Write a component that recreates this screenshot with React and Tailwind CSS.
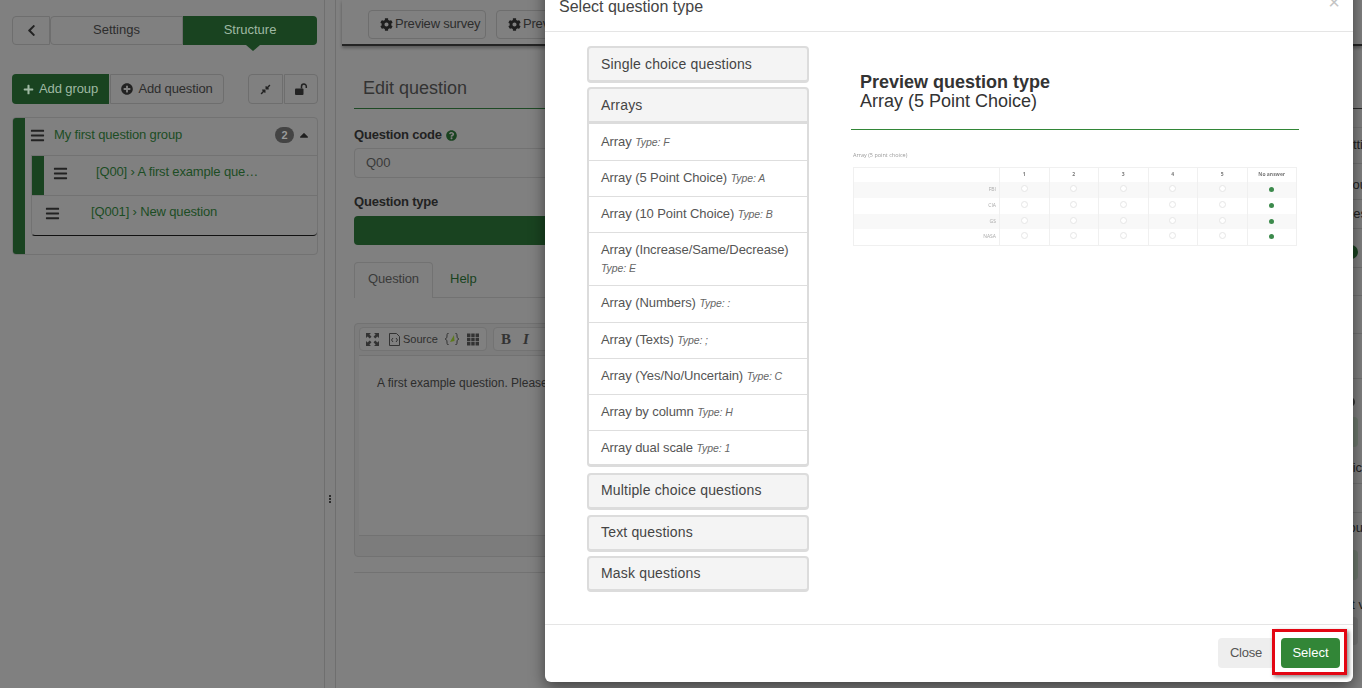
import React from "react";
import { FaBars, FaPlus, FaPlusCircle, FaCog, FaChevronLeft, FaCompressAlt, FaQuestionCircle, FaCaretUp } from "react-icons/fa";

const arrayItems = [
  ["Array", "F", "h-[37px] pt-[9px]"],
  ["Array (5 Point Choice)", "A", "h-9 pt-[8px]"],
  ["Array (10 Point Choice)", "B", "h-9 pt-[8px]"],
  ["Array (Increase/Same/Decrease)", "E", "h-[53px] pt-[8px]"],
  ["Array (Numbers)", ":", "h-[37px] pt-[8px]"],
  ["Array (Texts)", ";", "h-9 pt-[8px]"],
  ["Array (Yes/No/Uncertain)", "C", "h-9 pt-[8px]"],
  ["Array by column", "H", "h-9 pt-[8px]"],
  ["Array dual scale", "1", "h-9 pt-[8px]"],
];

function GroupHead({ children, mt = "mt-1", h = "h-[37px]", open }) {
  return (
    <div className={`${mt} ${h} ${open ? "rounded-t" : "rounded"} flex items-center border-x-2 border-t-2 border-b-[3px] border-[#dcdcdc] bg-[#f4f4f4] pl-3 text-[14px] tracking-[0.17px] text-[#444]`}>
      {children}
    </div>
  );
}

function PreviewTable() {
  const cols = ["1", "2", "3", "4", "5", "No answer"];
  const rows = ["FBI", "CIA", "GS", "NASA"];
  return (
    <div className="ml-[2px] mt-[21px] w-[444px] text-[#999] blur-[0.3px]" style={{ fontFamily: '"Open Sans", sans-serif' }}>
      <div className="text-[5.5px] leading-[8px]">Array (5 point choice)</div>
      <div className="mt-[8px] border border-[#f0f0f0]">
        <div className="flex h-[14px] items-center">
          <div className="h-full w-[146px] border-r border-[#f0f0f0]" />
          {cols.map((c) => (
            <div key={c} className="flex h-full flex-1 items-center justify-center border-r border-[#f0f0f0] text-[5px] font-bold text-[#777] last:border-r-0">{c}</div>
          ))}
        </div>
        {rows.map((r, i) => (
          <div key={r} className={`flex h-[15.75px] items-center ${i % 2 === 0 ? "bg-[#f8f8f8]" : "bg-white"}`}>
            <div className="flex h-full w-[146px] items-center justify-end border-r border-[#f0f0f0] pr-[3px] text-[5px] text-[#aaa]">{r}</div>
            {cols.map((c, j) => (
              <div key={c} className="flex h-full flex-1 items-start justify-center border-r border-[#f0f0f0] pt-[3px] last:border-r-0">
                {j === 5 ? (
                  <span className="mt-[2px] h-[5px] w-[5px] rounded-full bg-[#3c8a4c]" />
                ) : (
                  <span className="h-[7px] w-[7px] rounded-full border border-[#e6e6e6] bg-white" />
                )}
              </div>
            ))}
          </div>
        ))}
      </div>
    </div>
  );
}

function Dialog() {
  return (
    <div className="absolute left-[545px] top-[-24px] flex h-[706px] w-[808px] flex-col rounded-md bg-white shadow-[0_5px_15px_rgba(0,0,0,0.5)]">
      <div className="flex h-[56px] shrink-0 items-start justify-between border-b border-[#e5e5e5] pl-[14px] pr-[13px] pt-[21px]">
        <div className="text-[16px] leading-5 text-[#444]">Select question type</div>
        <div className="mt-[-5px] text-[20px] leading-5 text-[#c4c4c4]">×</div>
      </div>
      <div className="flex flex-1">
        <div className="ml-[42px] mt-[14px] w-[222px]">
          <GroupHead mt="mt-0">Single choice questions</GroupHead>
          <GroupHead open>Arrays</GroupHead>
          <div className="h-[343px] rounded-b border-x-2 border-b-[3px] border-[#dcdcdc] bg-white">
            {arrayItems.map(([name, type, h]) => (
              <div key={name} className={`${h} border-b border-[#dedede] px-3 text-[13px] leading-[18px] tracking-[-0.08px] text-[#555] last:border-b-0`}>
                {name} <span className="text-[10.5px] italic text-[#666]">Type: {type}</span>
              </div>
            ))}
          </div>
          <GroupHead mt="mt-[6px]" h="h-[37px] pb-px">Multiple choice questions</GroupHead>
          <GroupHead mt="mt-[5px]" h="h-[37px] pb-px">Text questions</GroupHead>
          <GroupHead mt="mt-[4px]" h="h-[36px]">Mask questions</GroupHead>
        </div>
        <div className="ml-[42px] w-[448px] pt-[41px]">
          <div className="pl-[9px] text-[18px] leading-[19px] text-[#333]">
            <div className="font-bold">Preview question type</div>
            <div>Array (5 Point Choice)</div>
          </div>
          <div className="mt-[18px] h-px bg-[#328637]" />
          <PreviewTable />
        </div>
      </div>
      <div className="relative flex h-[58px] shrink-0 items-start justify-end gap-[7px] border-t border-[#e5e5e5] pr-[13px] pt-[13px]">
        <button className="h-[30px] w-[56px] rounded bg-[#eeeeee] text-[13px] tracking-[-0.2px] text-[#555]">Close</button>
        <button className="h-[30px] w-[59px] rounded bg-[#328637] text-[13px] font-medium text-white">Select</button>
        <div className="absolute left-[727px] top-[4px] h-[46px] w-[75px] border-[3px] border-[#e30613] shadow-[2px_2px_4px_rgba(0,0,0,0.45)]" />
      </div>
    </div>
  );
}

function Sidebar() {
  return (
    <aside className="h-full w-[325px] shrink-0 border-r border-[#6f6f6f] pl-3 pr-[6px] pt-4 text-[13px]">
      <div className="flex h-[29px] w-[305px]">
        <button className="flex w-[38px] items-center justify-center rounded-l border border-[#6e6e6e] text-[#222]"><FaChevronLeft className="text-[13px]" /></button>
        <button className="w-[133px] rounded-l border border-[#6e6e6e] pb-px text-[#2d2d2d]">Settings</button>
        <div className="relative flex-1 rounded-r bg-[#194320] text-center leading-[27px] text-[#9fb9a3]">
          Structure
          <span className="absolute left-[63px] top-[29px] h-0 w-0 border-x-[7px] border-t-[6px] border-x-transparent border-t-[#194320]" />
        </div>
      </div>
      <div className="mt-[29px] flex h-[30px] w-[306px]">
        <button className="flex w-[97px] items-center justify-center gap-[5px] rounded-l bg-[#194320] tracking-[-0.1px] text-[#9fb9a3]"><FaPlus className="text-[11px]" />Add group</button>
        <button className="ml-px flex w-[114px] items-center justify-center gap-[5px] rounded-r border border-[#6e6e6e] tracking-[-0.15px] text-[#2d2d2d]"><FaPlusCircle className="text-[12px] text-[#222]" />Add question</button>
        <button className="ml-[24px] flex w-[35px] items-center justify-center rounded-l border border-[#6e6e6e] text-[#222]"><FaCompressAlt className="text-[11px]" /></button>
        <button className="ml-px flex w-[34px] items-center justify-center rounded-r border border-[#6e6e6e] text-[#222]">
          <svg width="13" height="13" viewBox="0 0 13 13"><rect x="0" y="5.5" width="8.5" height="6.5" rx="1" fill="#222" /><path d="M6.5 5.5V3.4a2.4 2.4 0 0 1 4.8 0V5" fill="none" stroke="#222" strokeWidth="1.5" /></svg>
        </button>
      </div>
      <div className="mt-[13px] flex h-[138px] w-[306px] overflow-hidden rounded border border-[#727272]">
        <div className="w-3 shrink-0 bg-[#194320]" />
        <div className="flex-1 tracking-[-0.15px] text-[#1c4d24]">
          <div className="flex h-[37px] items-center pb-[3px] pl-[5px] pr-[6px]">
            <FaBars className="text-[15px] text-[#222]" />
            <span className="ml-[9px] flex-1">My first question group</span>
            <span className="flex h-[16px] w-[19px] items-center justify-center rounded-full bg-[#444] text-[11px] font-bold text-[#9a9a9a]">2</span>
            <FaCaretUp className="ml-[3px] text-[14px] text-[#1f1f1f]" />
          </div>
          <div className="ml-[6px] h-[81px] rounded-b border border-r-0 border-x-[#727272] border-t-[#727272] border-b-[#111]">
            <div className="flex h-[40px] border-b border-[#727272]">
              <div className="w-3 bg-[#194320]" />
              <FaBars className="ml-[9px] mt-[10px] text-[15px] text-[#222]" />
              <span className="ml-[28px] mt-[6px]">[Q00] › A first example que…</span>
            </div>
            <div className="flex h-[40px]">
              <FaBars className="ml-[13px] mt-[10px] text-[15px] text-[#222]" />
              <span className="ml-[31px] mt-[6px]">[Q001] › New question</span>
            </div>
          </div>
        </div>
      </div>
    </aside>
  );
}

function Editor() {
  return (
    <div className="mt-[25px] h-[234px] rounded border border-[#727272] bg-[#7c7c7c]">
      <div className="flex h-[31px] items-start pl-[4px] pt-[3px] text-[11px] text-[#2e2e2e]">
        <div className="flex h-[24px] w-[128px] items-center rounded-sm border border-[#737373] bg-[#808080] pl-[6px]">
          <svg width="13" height="13" viewBox="0 0 13 13" className="fill-[#333]"><path d="M0 0h5L3.4 1.6 5.5 3.7 3.7 5.5 1.6 3.4 0 5zM13 0v5l-1.6-1.6-2.1 2.1-1.8-1.8 2.1-2.1L8 0zM0 13V8l1.6 1.6 2.1-2.1 1.8 1.8-2.1 2.1L5 13zM13 13H8l1.6-1.6-2.1-2.1 1.8-1.8 2.1 2.1L13 8z" /></svg>
          <svg width="11" height="13" viewBox="0 0 11 13" className="ml-[10px] fill-none stroke-[#333]"><path d="M.5.5h7l3 3v9H.5zM4 5 2.5 7 4 9M7 5l1.5 2L7 9" /></svg>
          <span className="ml-[3px]">Source</span>
          <svg width="14" height="12" viewBox="0 0 14 12" className="ml-[7px]"><path d="M4 0C2 0 2 1 2 3s-1 3-2 3c1 0 2 1 2 3s0 3 2 3M10 0c2 0 2 1 2 3s1 3 2 3c-1 0-2 1-2 3s0 3-2 3" fill="none" stroke="#333" /><path d="M5 9 9 2l.5 6z" fill="#5d7a1c" /></svg>
          <svg width="12" height="13" viewBox="0 0 13 13" className="ml-[8px] fill-[#333]"><path d="M0 0h3.7v3.7H0zM4.6 0h3.7v3.7H4.6zM9.3 0H13v3.7H9.3zM0 4.6h3.7v3.7H0zM4.6 4.6h3.7v3.7H4.6zM9.3 4.6H13v3.7H9.3zM0 9.3h3.7V13H0zM4.6 9.3h3.7V13H4.6zM9.3 9.3H13V13H9.3z" /></svg>
        </div>
        <div className="ml-[6px] flex h-[24px] w-[100px] items-center gap-[12px] rounded-sm border border-[#737373] bg-[#808080] pl-[7px] text-[15px] font-bold text-[#333]" style={{ fontFamily: '"Liberation Serif", serif' }}>
          <span>B</span><span className="italic">I</span>
        </div>
      </div>
      <div className="ml-[4px] h-[181px] border-y border-[#727272] bg-[#808080] pl-[18px] pt-[19px] text-[12px] leading-4 text-[#2c2c2c] whitespace-nowrap">A first example question. Please answer this question:</div>
    </div>
  );
}

function Main() {
  return (
    <main className="h-full flex-1 overflow-hidden pl-[6px]">
      <div className="flex h-[46px] items-start gap-[10px] border-b-[2px] border-[#242424] pl-[26px] pt-[10px] text-[13px] tracking-[-0.2px] text-[#2d2d2d] shadow-[0_2px_3px_rgba(0,0,0,0.3)]">
        <button className="flex h-[29px] w-[118px] items-center gap-[2px] rounded-sm border border-[#6e6e6e] pb-px pl-[11px]"><FaCog className="text-[13px] text-[#1f1f1f]" />Preview survey</button>
        <button className="flex h-[29px] w-[118px] items-center gap-[2px] rounded-sm border border-[#6e6e6e] pb-px pl-[11px]"><FaCog className="text-[13px] text-[#1f1f1f]" />Preview group</button>
      </div>
      <div className="flex">
        <div className="ml-[12px] w-[950px] shrink-0">
          <div className="mt-[24px] h-[39px] border-b border-[#1e4a25] pl-[9px] text-[18px] leading-9 text-[#333]">Edit question</div>
          <div className="mt-[17px] flex items-center gap-1 text-[13px] font-bold leading-[18px] tracking-[-0.2px] text-[#222]">Question code <FaQuestionCircle className="text-[11px] text-[#194320]" /></div>
          <div className="mt-[4px] h-[30px] rounded border border-[#727272] pl-[11px] text-[13px] leading-[28px] text-[#3a3a3a]">Q00</div>
          <div className="mt-[15px] text-[13px] font-bold leading-[18px] tracking-[-0.2px] text-[#222]">Question type</div>
          <div className="mt-[5px] h-[29px] rounded bg-[#194320]" />
          <div className="mt-[17px] flex h-[36px] border-b border-[#727272] text-[13px]">
            <div className="h-[36px] w-[79px] rounded-t border border-b-0 border-[#727272] bg-[#808080] text-center leading-[31px] tracking-[-0.15px] text-[#3a3a3a]">Question</div>
            <div className="ml-[17px] leading-[33px] text-[#194320]">Help</div>
          </div>
          <Editor />
          <div className="mt-[15px] h-px bg-[#727272]" />
        </div>
        <RightPeek />
      </div>
    </main>
  );
}

function RightPeek() {
  return (
    <div className="ml-[27px] w-[40px] shrink-0 whitespace-nowrap text-[13px] leading-4 text-[#222]">
      <div className="h-[63px] border-b border-[#2a2a2a]" />
      <div className="h-[19px] border-b border-[#757575]" />
      <div className="h-[36px] border-b border-[#727272] pl-[6px] pt-[9px]">Settings</div>
      <div className="h-[36px] border-b border-[#727272] pl-[7px] pt-[13px]">Group</div>
      <div className="h-[29px] border-b border-[#727272] pl-[5px] pt-[6px]">Question</div>
      <div className="h-[39px] border-b border-[#727272] pl-[13px] pt-[16px]"><div className="h-[14px] w-[14px] rounded-full bg-[#194320]" /></div>
      <div className="h-[28px] border-b border-[#727272]" />
      <div className="h-[38px] border-b border-[#727272]" />
      <div className="h-[45px] border-b border-[#727272]" />
      <div className="h-[105px] border-b border-[#727272] pt-[18px]">
        <div className="ml-[14px] h-[10px] w-[10px] rounded-full bg-[#333]" />
        <div className="mt-[10px] h-[30px] w-[27px] rounded bg-[#6f7a6f]" />
        <div className="mt-[13px]">Logic</div>
      </div>
      <div className="h-[29px] border-b border-[#727272]" />
      <div className="pl-[3px] pt-[7px]">Group</div>
      <div className="mt-[14px] h-[30px] w-[27px] rounded bg-[#6f7a6f]" />
      <div className="mt-[17px]">Text v</div>
      <div className="mt-[4px] h-[28px] w-[27px] rounded bg-[#757575]" />
    </div>
  );
}

export default function App() {
  return (
    <div className="relative flex h-[688px] w-[1362px] overflow-hidden bg-[#808080]" style={{ fontFamily: '"Liberation Sans", Arial, sans-serif' }}>
      <Sidebar />
      <div className="relative w-[11px] shrink-0 border-r border-[#6f6f6f]">
        <div className="absolute left-[4px] top-[495px] flex flex-col gap-px">
          <span className="h-[2px] w-[2px] rounded-full bg-[#111]" />
          <span className="h-[2px] w-[2px] rounded-full bg-[#111]" />
          <span className="h-[2px] w-[2px] rounded-full bg-[#111]" />
        </div>
      </div>
      <Main />
      <Dialog />
    </div>
  );
}
